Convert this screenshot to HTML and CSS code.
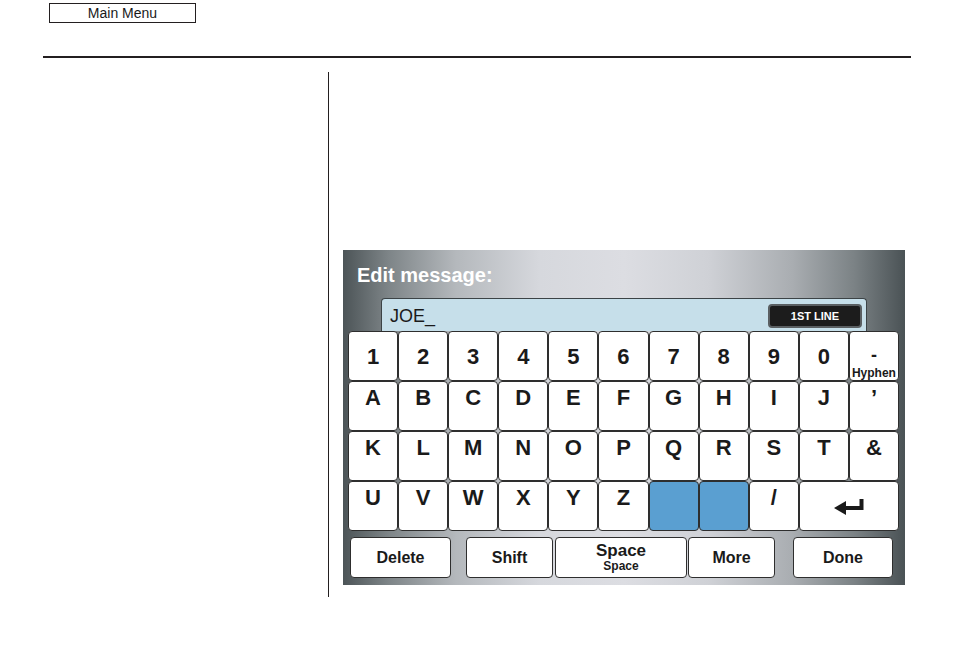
FILE: index.html
```html
<!DOCTYPE html>
<html>
<head>
<meta charset="utf-8">
<link rel="stylesheet" href="styles.css">
</head>
<body>
<div class="top">
  <div class="main-menu">Main Menu</div>
</div>
<div class="rule"></div>
<div class="content">
  <div class="panel">
    <div class="title">Edit message:</div>
    <div class="input">
      <span class="entry">JOE_</span>
      <span class="line-btn">1ST LINE</span>
    </div>
    <div class="keys">
      <div class="key r1">1</div><div class="key r1">2</div><div class="key r1">3</div><div class="key r1">4</div><div class="key r1">5</div><div class="key r1">6</div><div class="key r1">7</div><div class="key r1">8</div><div class="key r1">9</div><div class="key r1">0</div>
      <div class="key hyphen"><span class="dash">-</span><span class="sub">Hyphen</span></div>
      <div class="key">A</div><div class="key">B</div><div class="key">C</div><div class="key">D</div><div class="key">E</div><div class="key">F</div><div class="key">G</div><div class="key">H</div><div class="key">I</div><div class="key">J</div><div class="key">’</div>
      <div class="key">K</div><div class="key">L</div><div class="key">M</div><div class="key">N</div><div class="key">O</div><div class="key">P</div><div class="key">Q</div><div class="key">R</div><div class="key">S</div><div class="key">T</div><div class="key">&amp;</div>
      <div class="key">U</div><div class="key">V</div><div class="key">W</div><div class="key">X</div><div class="key">Y</div><div class="key">Z</div><div class="key blue"></div><div class="key blue"></div><div class="key">/</div>
      <div class="key enter">
        <svg width="30" height="18" viewBox="0 0 30 18"><path d="M27.5 1 V10 H11" fill="none" stroke="#1a1a1a" stroke-width="4"/><polygon points="0,10 12,3 12,17" fill="#1a1a1a"/></svg>
      </div>
    </div>
    <div class="bottom">
      <div class="btn b-delete">Delete</div>
      <div class="btn b-shift">Shift</div>
      <div class="btn b-space"><span>Space</span><span class="sub">Space</span></div>
      <div class="btn b-more">More</div>
      <div class="btn b-done">Done</div>
    </div>
  </div>
</div>
</body>
</html>
```
FILE: styles.css
```css
html, body {
  margin: 0;
  padding: 0;
  background: #fff;
  font-family: "Liberation Sans", Arial, sans-serif;
  color: #1a1a1a;
}
.top {
  height: 56px;
  padding-top: 3px;
  box-sizing: border-box;
}
.main-menu {
  margin-left: 49px;
  width: 147px;
  height: 20px;
  box-sizing: border-box;
  border: 1px solid #231f20;
  font-size: 14px;
  line-height: 18px;
  text-align: center;
}
.rule {
  margin-left: 43px;
  width: 868px;
  height: 2px;
  background: #231f20;
}
.content {
  margin-top: 14px;
  margin-left: 328px;
  border-left: 1px solid #231f20;
  height: 525px;
  box-sizing: border-box;
  padding: 178px 0 0 14px;
}
.panel {
  width: 562px;
  height: 335px;
  box-sizing: border-box;
  background: linear-gradient(90deg, #4c5457 0%, #7d8487 8%, #b4b8bc 20%, #d6d8dd 35%, #dcdde2 50%, #cfd1d6 65%, #a9adb1 80%, #7b8285 91%, #4a5255 100%);
  display: flex;
  flex-direction: column;
}
.title {
  color: #fff;
  font-weight: bold;
  font-size: 20px;
  line-height: 20px;
  padding: 15px 0 0 14px;
  height: 20px;
}
.input {
  margin: 13px 0 0 38px;
  width: 486px;
  height: 33px;
  box-sizing: border-box;
  background: #c6dfea;
  border: 1px solid #3c4346;
  border-bottom: none;
  border-radius: 4px 4px 0 0;
  display: flex;
  align-items: center;
  justify-content: space-between;
  padding: 0 4px 0 8px;
}
.entry {
  font-size: 18px;
  line-height: 18px;
  margin-top: 2px;
}
.line-btn {
  width: 94px;
  height: 24px;
  box-sizing: border-box;
  background: #1c1c1c;
  border: 2px solid #5a5f62;
  border-radius: 4px;
  color: #fff;
  font-weight: bold;
  font-size: 11px;
  display: flex;
  align-items: center;
  justify-content: center;
  margin-top: 1px;
}
.keys {
  margin-left: 5px;
  width: 551px;
  display: grid;
  grid-template-columns: repeat(11, 1fr);
  grid-template-rows: repeat(4, 50px);
}
.key {
  background: #fff;
  border: 1px solid #2e2e2e;
  border-radius: 4px;
  font-weight: bold;
  font-size: 22px;
  line-height: 22px;
  text-align: center;
  padding-top: 5px;
  box-sizing: border-box;
}
.key.r1 {
  padding-top: 14px;
}
.key.hyphen {
  display: flex;
  flex-direction: column;
  align-items: center;
  padding-top: 13px;
}
.key.hyphen .dash {
  display: block;
  font-size: 18px;
  line-height: normal;
}
.key.hyphen .sub {
  line-height: normal;
}
.sub {
  font-size: 12px;
  line-height: 13px;
  font-weight: bold;
}
.key.blue {
  background: #5a9fd1;
}
.key.enter {
  grid-column: span 2;
  display: flex;
  justify-content: center;
  padding-top: 16px;
}
.bottom {
  margin-top: 6px;
  display: flex;
  height: 41px;
}
.btn {
  background: #fff;
  border: 1px solid #2e2e2e;
  border-radius: 4px;
  box-sizing: border-box;
  height: 41px;
  font-weight: bold;
  font-size: 16px;
  display: flex;
  flex-direction: column;
  align-items: center;
  justify-content: center;
}
.b-delete { margin-left: 7px; width: 101px; }
.b-shift { margin-left: 15px; width: 87px; }
.b-space { margin-left: 2px; width: 132px; font-size: 17px; line-height: 17px; }
.b-space .sub { font-size: 12px; line-height: 14px; }
.b-more { margin-left: 1px; width: 87px; }
.b-done { margin-left: 18px; width: 100px; }
```
